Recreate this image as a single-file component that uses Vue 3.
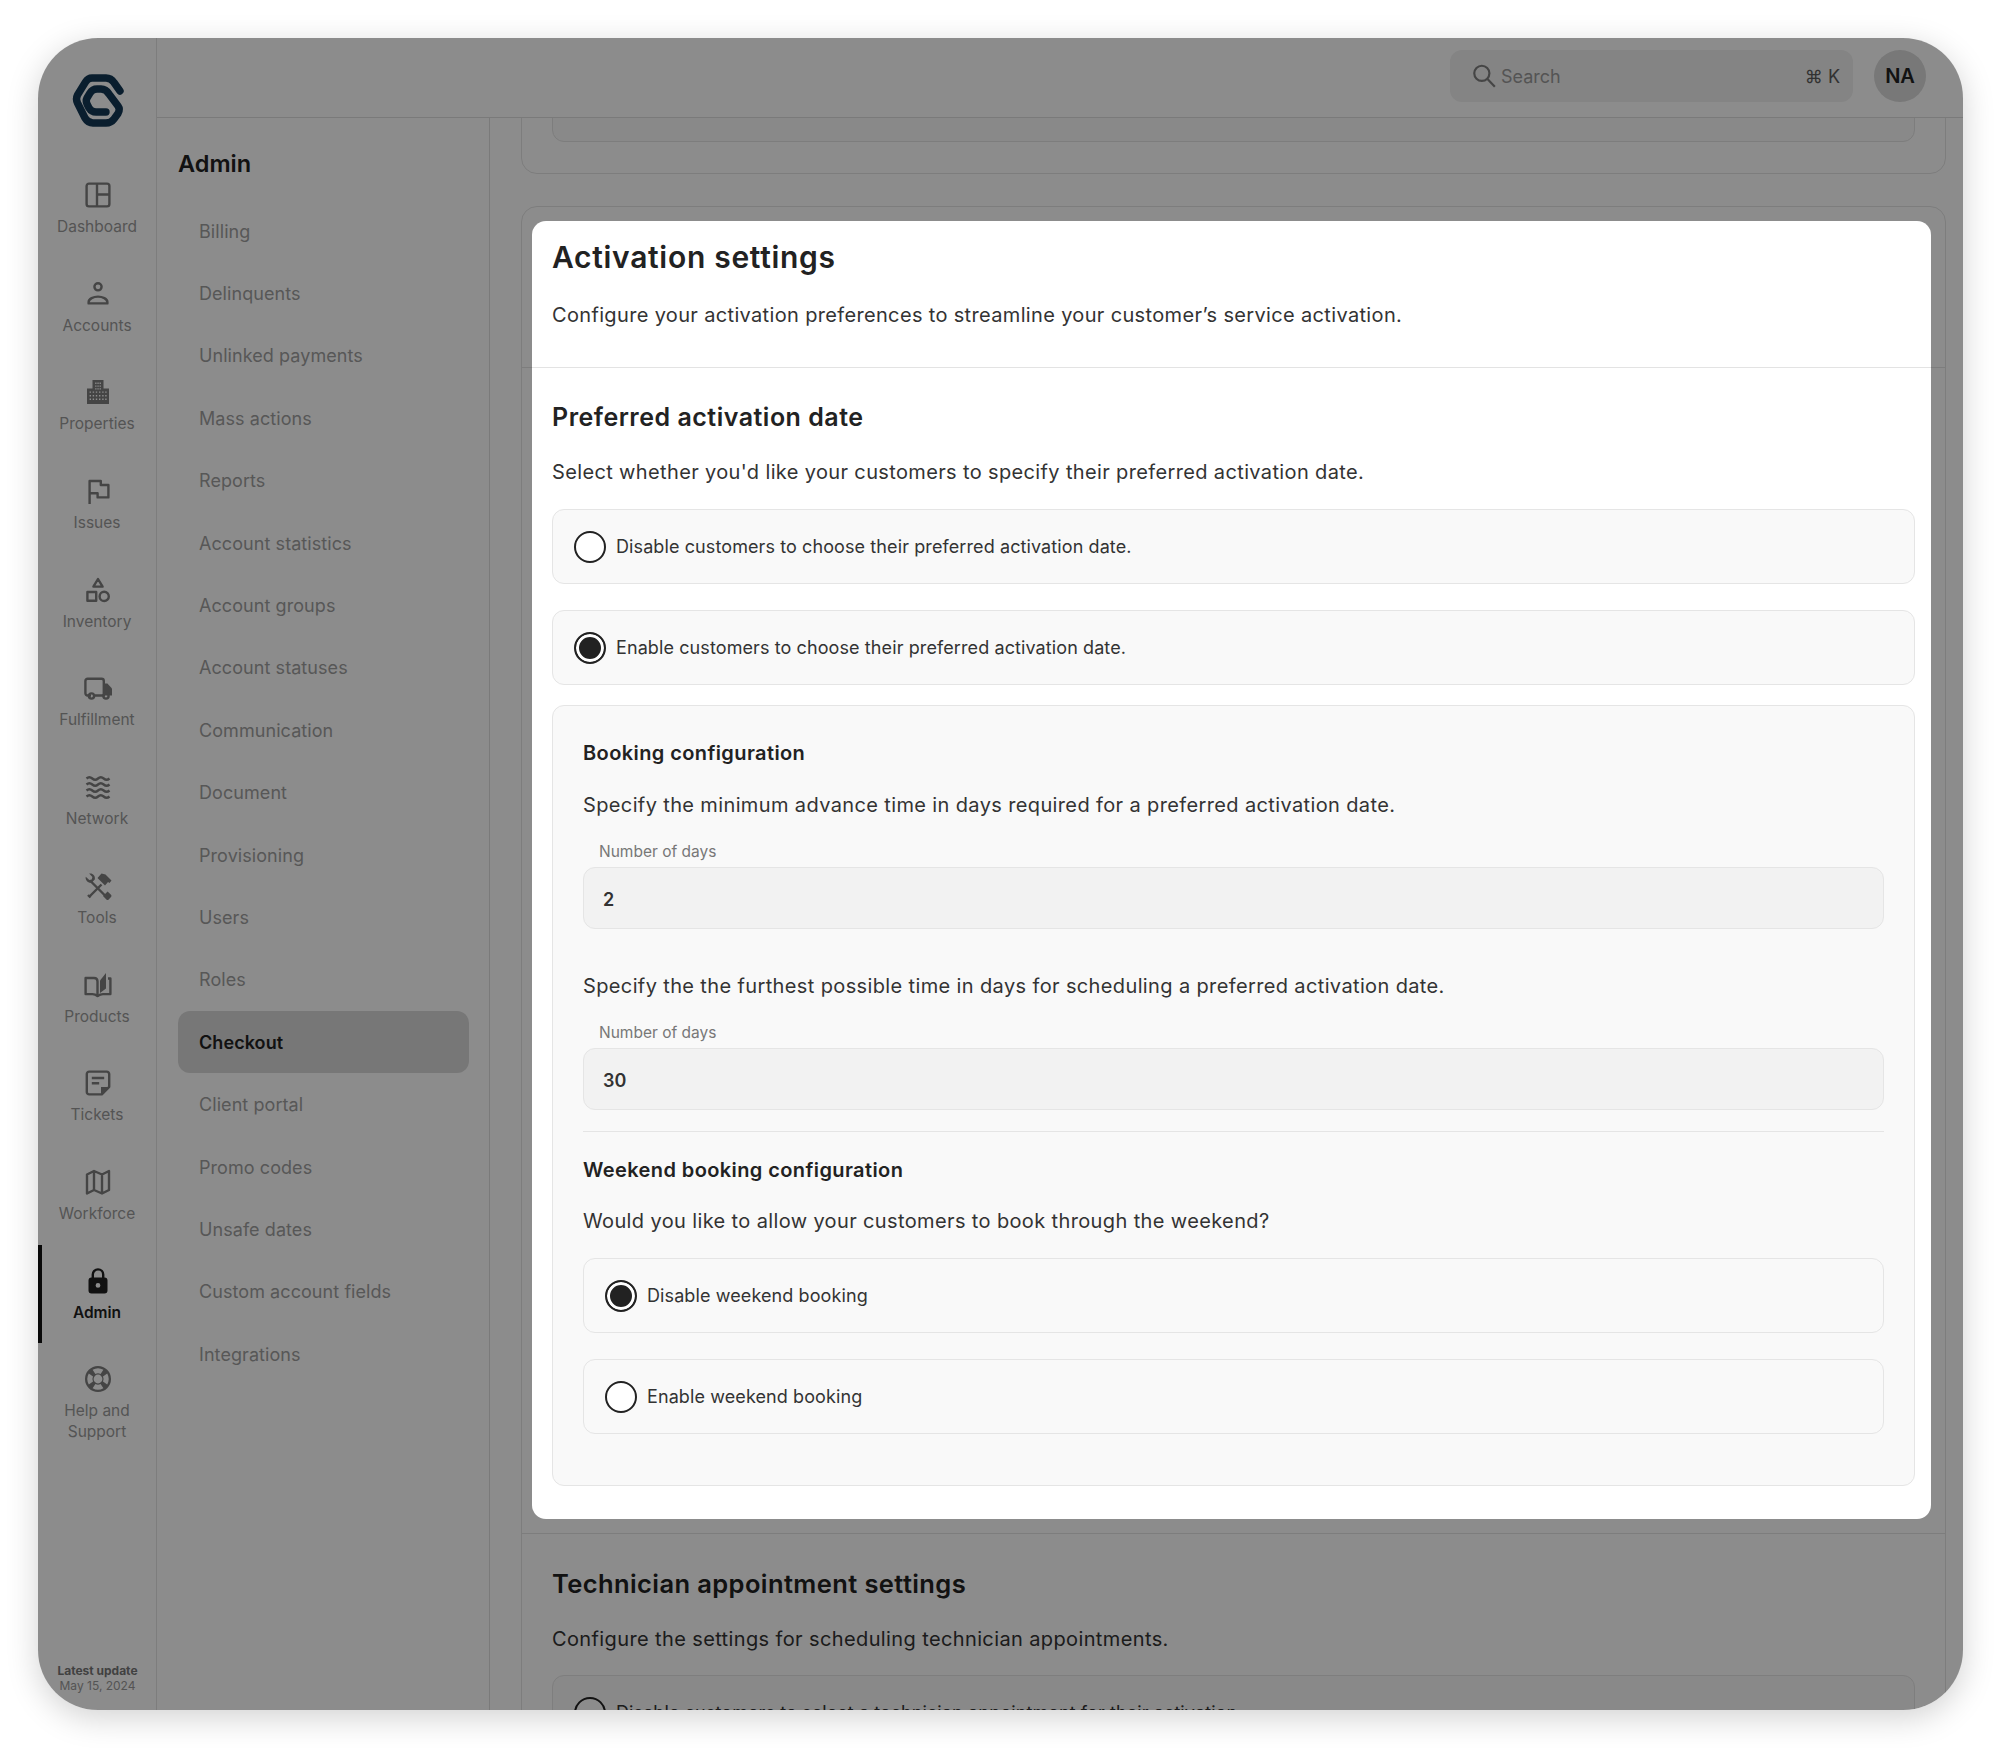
<script setup>
const stroke = (d) => ({ d, f: false })
const fill = (d) => ({ d, f: true })
const holes = (xs, ys, s) =>
  xs.flatMap((x) => ys.map((y) => `M${x} ${y}h${s}v${s}h-${s}z`)).join('')

const rail = [
  { label: 'Dashboard', paths: [stroke('M7 4.6h18a2.4 2.4 0 0 1 2.4 2.4v18a2.4 2.4 0 0 1-2.4 2.4H7A2.4 2.4 0 0 1 4.6 25V7A2.4 2.4 0 0 1 7 4.6zM15 4.6v22.8M15 15.5h12.4')] },
  { label: 'Accounts', paths: [stroke('M16 5.2a3.6 3.6 0 1 1 0 7.2a3.6 3.6 0 0 1 0-7.2z'), stroke('M6.6 25.4v-1.2c0-3.3 5-5.6 9.4-5.6s9.4 2.3 9.4 5.6v1.2z')] },
  { label: 'Properties', paths: [fill('M10.5 4h11v8.5h5.5V28H5V12.5h5.5z' + holes([13.2, 15.4, 17.6], [6.6, 9.4, 12.2], 1.3) + holes([7.6, 10.7, 13.8, 17, 20.2, 23.2], [15.4, 19, 22.6], 1.4))] },
  { label: 'Issues', paths: [stroke('M7.6 29V6h11.2v4h7.6v12.4H15.6v-4.2H7.6')] },
  { label: 'Inventory', paths: [stroke('M16 5l4.6 7.6h-9.2z'), stroke('M5.4 18h8.8v8.8H5.4z'), stroke('M22.2 17.8a4.6 4.6 0 1 1 0 9.2a4.6 4.6 0 0 1 0-9.2z')] },
  { label: 'Fulfillment', paths: [stroke('M9 23.5H5.6a2.2 2.2 0 0 1-2.2-2.2V9a2.2 2.2 0 0 1 2.2-2.2h14a2.2 2.2 0 0 1 2.2 2.2v14.5H13'), fill('M21.8 11.6h3.6l4.6 5v6.9h-8.2z'), stroke('M9.5 21.4a2.6 2.6 0 1 1 0 5.2a2.6 2.6 0 0 1 0-5.2z'), stroke('M24 21.4a2.6 2.6 0 1 1 0 5.2a2.6 2.6 0 0 1 0-5.2z')] },
  { label: 'Network', paths: [stroke('M4.5 7.5q2.9-2.6 5.8 0t5.7 0t5.7 0t5.8 0M4.5 13.5q2.9-2.6 5.8 0t5.7 0t5.7 0t5.8 0M4.5 19.5q2.9-2.6 5.8 0t5.7 0t5.7 0t5.8 0M4.5 25.5q2.9-2.6 5.8 0t5.7 0t5.7 0t5.8 0')] },
  { label: 'Tools', paths: [stroke('M7.5 26.5l12-12'), fill('M15.5 8l4-4.5 4 1 6 6-2 2.5-1.5-1-3 3.5-4-4z'), stroke('M6 25l2.5 2.5'), stroke('M9 11.5l15 15'), fill('M3.8 6.8l3.5 3.3 2.4-.7.7-2.3-3.3-3.5c3-1 6.6 1.8 5.7 5.8l-3.2 3.4c-3.6.6-6.8-3-5.8-6z'), fill('M21 26l4.6-4.6 3.4 3.4a1.6 1.6 0 0 1 0 2.3l-2.3 2.3a1.6 1.6 0 0 1-2.3 0z')] },
  { label: 'Products', paths: [stroke('M15.5 27c-1.6-1.3-3-1.9-5-1.9H3.6V9h8.4c2 0 3.5 1.5 3.5 3.5z'), fill('M18 24V11.5L24 4v15.5z'), stroke('M26 9.5h2.4v15.6H21c-2 0-3.5.6-5.5 1.9')] },
  { label: 'Tickets', paths: [stroke('M7.2 4.6h17.6a2.4 2.4 0 0 1 2.4 2.4v12.8L19.8 27.4H7.2A2.4 2.4 0 0 1 4.8 25V7a2.4 2.4 0 0 1 2.4-2.4z'), stroke('M9.8 11h12.4M9.8 16.2h7.4'), fill('M19 27.4V20h8.2z')] },
  { label: 'Workforce', paths: [stroke('M5 8.5l7-3.5 8 3.5 7-3.5v19l-7 3.5-8-3.5-7 3.5zM12 5v19M20 8.5v19')] },
  { label: 'Admin', active: true, paths: [fill('M9.5 12.5h13a3 3 0 0 1 3 3v10a3 3 0 0 1-3 3h-13a3 3 0 0 1-3-3v-10a3 3 0 0 1 3-3zM16 18a2.4 2.4 0 1 0 0 4.8a2.4 2.4 0 0 0 0-4.8z'), stroke('M10.8 13V9.6a5.2 5.2 0 0 1 10.4 0V13')] },
  { label: 'Help and Support', paths: [fill('M16 3a13 13 0 1 1 0 26a13 13 0 0 1 0-26zM16 11.6a4.4 4.4 0 1 0 0 8.8a4.4 4.4 0 0 0 0-8.8zM10.6 6.8l2.8 4.2a6 6 0 0 1 5.2 0l2.8-4.2a11 11 0 0 0-10.8 0zM25.2 10.6l-4.2 2.8a6 6 0 0 1 0 5.2l4.2 2.8a11 11 0 0 0 0-10.8zM21.4 25.2l-2.8-4.2a6 6 0 0 1-5.2 0l-2.8 4.2a11 11 0 0 0 10.8 0zM6.8 21.4l4.2-2.8a6 6 0 0 1 0-5.2l-4.2-2.8a11 11 0 0 0 0 10.8z')] },
]

const nav = ['Billing', 'Delinquents', 'Unlinked payments', 'Mass actions', 'Reports', 'Account statistics', 'Account groups', 'Account statuses', 'Communication', 'Document', 'Provisioning', 'Users', 'Roles', 'Checkout', 'Client portal', 'Promo codes', 'Unsafe dates', 'Custom account fields', 'Integrations']
</script>

<template>
  <div class="page">
    <div class="window">
      <aside class="rail">
        <svg class="logo" viewBox="0 0 56 56" width="56" height="56" fill="none" stroke="#133854" stroke-width="7.4" stroke-linecap="round" stroke-linejoin="round">
          <path d="M50 18L44 9.5Q41 5 36 5H22Q18 5 15.5 9L7.5 22Q5.5 26 7.5 30L15 45Q18 50 23 50H36Q41 50 44 46L48 40.5Q50.5 36.5 48 33L39 21Q36 16 31 16H27Q22.5 16 20 20L17 25Q15.5 28 17 31L19 35Q21.5 39 26 39H36" />
        </svg>
        <a v-for="item in rail" :key="item.label" class="rail-item" :class="{ active: item.active }">
          <svg class="rail-icon" viewBox="0 0 32 32" width="32" height="32">
            <path
              v-for="(p, i) in item.paths"
              :key="i"
              :d="p.d"
              :fill="p.f ? 'currentColor' : 'none'"
              :stroke="p.f ? 'none' : 'currentColor'"
              fill-rule="evenodd"
              stroke-width="2.4"
              stroke-linejoin="round"
            />
          </svg>
          <span class="rail-label">{{ item.label }}</span>
        </a>
        <div class="update">
          <strong>Latest update</strong>
          <span>May 15, 2024</span>
        </div>
      </aside>

      <div class="column">
        <header class="topbar">
          <div class="search">
            <svg viewBox="0 0 24 24" width="26" height="26" fill="none" stroke-width="2">
              <circle cx="10" cy="9.5" r="7" />
              <path d="M15.2 14.7L22 22" />
            </svg>
            <span class="search-text">Search</span>
            <span class="kbd">⌘ K</span>
          </div>
          <div class="avatar">NA</div>
        </header>

        <div class="body">
          <nav class="sidebar">
            <h2>Admin</h2>
            <a v-for="n in nav" :key="n" class="nav-item" :class="{ selected: n === 'Checkout' }">{{ n }}</a>
          </nav>

          <main class="main">
            <section class="panel panel-prev"><div class="prev-box"></div></section>

            <section class="panel">
              <div class="panel-head">
                <h1>Activation settings</h1>
                <p>Configure your activation preferences to streamline your customer’s service activation.</p>
              </div>
              <div class="panel-body">
                <h3>Preferred activation date</h3>
                <p class="lead">Select whether you'd like your customers to specify their preferred activation date.</p>
                <label class="option"><i class="radio"></i>Disable customers to choose their preferred activation date.</label>
                <label class="option second"><i class="radio on"></i>Enable customers to choose their preferred activation date.</label>

                <div class="box">
                  <h4>Booking configuration</h4>
                  <p class="box-lead">Specify the minimum advance time in days required for a preferred activation date.</p>
                  <div class="field-label">Number of days</div>
                  <div class="input">2</div>
                  <p class="box-lead spaced">Specify the the furthest possible time in days for scheduling a preferred activation date.</p>
                  <div class="field-label">Number of days</div>
                  <div class="input">30</div>
                  <hr />
                  <h4>Weekend booking configuration</h4>
                  <p class="box-lead tight">Would you like to allow your customers to book through the weekend?</p>
                  <label class="option"><i class="radio on"></i>Disable weekend booking</label>
                  <label class="option second"><i class="radio"></i>Enable weekend booking</label>
                </div>
              </div>

              <div class="panel-head tech">
                <h1 class="tech-title">Technician appointment settings</h1>
                <p>Configure the settings for scheduling technician appointments.</p>
                <label class="option tech-option"><i class="radio"></i>Disable customers to select a technician appointment for their activation.</label>
              </div>
            </section>
          </main>
        </div>
      </div>

      <div class="spotlight"></div>
    </div>
  </div>
</template>

<style scoped>
.page {
  width: 2000px;
  height: 1748px;
  box-sizing: border-box;
  padding: 38px;
  background: #fff;
  font-family: Inter, "Noto Sans", sans-serif;
  color: #222;
}
.window {
  position: relative;
  display: flex;
  width: 1925px;
  height: 1672px;
  overflow: hidden;
  border-radius: 60px;
  background: #fff;
  box-shadow: 0 8px 32px rgba(0, 0, 0, 0.18);
}
.spotlight {
  position: absolute;
  left: 494px;
  top: 183px;
  width: 1399px;
  height: 1298px;
  border-radius: 14px;
  box-shadow: 0 0 0 3000px rgba(0, 0, 0, 0.45);
  pointer-events: none;
}

.rail {
  flex: none;
  width: 119px;
  box-sizing: border-box;
  display: flex;
  flex-direction: column;
  align-items: stretch;
  border-right: 1px solid #e3e3e3;
}
.logo {
  flex: none;
  align-self: center;
  margin: 35px 0 30px 1px;
  height: 56px;
}
.rail-item {
  position: relative;
  flex: none;
  height: 98.7px;
  box-sizing: border-box;
  padding-top: 20px;
  display: flex;
  flex-direction: column;
  align-items: center;
  color: #7e7e7e;
}
.rail-item.active {
  color: #1f1f1f;
}
.rail-item.active::before {
  content: "";
  position: absolute;
  left: 0;
  top: 0;
  bottom: 0;
  width: 4px;
  background: #111;
}
.rail-icon {
  flex: none;
  display: block;
  margin-left: 1px;
}
.rail-label {
  margin-top: 6px;
  font-size: 15.5px;
  line-height: 20.5px;
  text-align: center;
  color: #9a9a9a;
  width: 100px;
}
.rail-item.active .rail-label {
  color: #1f1f1f;
  font-weight: 600;
}
.update {
  margin-top: auto;
  padding: 0 0 17px 1px;
  display: flex;
  flex-direction: column;
  align-items: center;
  font-size: 12px;
  line-height: 15px;
  color: #9a9a9a;
}
.update strong {
  color: #777;
  font-weight: 700;
}

.column {
  flex: 1;
  min-width: 0;
  display: flex;
  flex-direction: column;
}
.topbar {
  flex: none;
  height: 80px;
  box-sizing: border-box;
  border-bottom: 1px solid #dedede;
  display: flex;
  align-items: flex-start;
  justify-content: flex-end;
  padding: 12px 37px 0 0;
  gap: 21px;
}
.search {
  width: 403px;
  height: 52px;
  box-sizing: border-box;
  border-radius: 12px;
  background: #f0f0f0;
  display: flex;
  align-items: center;
  padding: 0 13px 0 21px;
  font-size: 18px;
  color: #9a9a9a;
}
.search svg {
  stroke: #7e7e7e;
  flex: none;
  margin-right: 4px;
}
.search-text {
  flex: 1;
}
.kbd {
  color: #5c5c5c;
}
.avatar {
  width: 52px;
  height: 52px;
  border-radius: 50%;
  background: #dadada;
  display: flex;
  align-items: center;
  justify-content: center;
  font-size: 20px;
  font-weight: 600;
  color: #222;
}

.body {
  flex: 1;
  min-height: 0;
  display: flex;
}
.sidebar {
  flex: none;
  width: 333px;
  box-sizing: border-box;
  border-right: 1px solid #dedede;
  padding: 31px 20px 0 21px;
  display: flex;
  flex-direction: column;
}
.sidebar h2 {
  margin: 0 0 21px;
  font-size: 23.5px;
  line-height: 30px;
  font-weight: 600;
  color: #222;
}
.nav-item {
  flex: none;
  height: 62.4px;
  box-sizing: border-box;
  padding-left: 21px;
  display: flex;
  align-items: center;
  border-radius: 12px;
  font-size: 18px;
  letter-spacing: 0.07px;
  color: #9f9f9f;
}
.nav-item.selected {
  background: #d9d9d9;
  color: #222;
  font-weight: 600;
}

.main {
  flex: 1;
  min-width: 0;
  overflow: hidden;
  padding: 0 17px 0 31px;
}
.panel {
  border: 1px solid #e3e3e3;
  border-radius: 16px;
  background: #fff;
}
.panel-prev {
  height: 100px;
  box-sizing: border-box;
  margin-top: -44px;
  margin-bottom: 32px;
  padding: 0 30px 31px;
}
.prev-box {
  height: 100%;
  box-sizing: border-box;
  border: 1px solid #e3e3e3;
  border-radius: 12px;
  background: #f9f9f9;
}
.panel-head {
  padding: 32px 30px 38px;
  border-bottom: 1px solid #e3e3e3;
}
h1 {
  margin: 0;
  font-size: 30px;
  letter-spacing: 0.7px;
  line-height: 36px;
  font-weight: 600;
  color: #222;
}
.panel-head p {
  margin: 26px 0 0;
  font-size: 20px;
  letter-spacing: 0.34px;
  line-height: 28px;
  color: #333;
}
.panel-body {
  padding: 34px 30px 47px;
  border-bottom: 1px solid #e3e3e3;
}
h3 {
  margin: 0;
  font-size: 25px;
  letter-spacing: 0.5px;
  line-height: 30px;
  font-weight: 600;
  color: #222;
}
.lead {
  margin: 26px 0 23px;
  font-size: 20px;
  letter-spacing: 0.36px;
  line-height: 28px;
  color: #333;
}
.option {
  height: 75px;
  box-sizing: border-box;
  display: flex;
  align-items: center;
  gap: 10px;
  padding: 0 21px;
  border: 1px solid #e5e5e5;
  border-radius: 12px;
  background: #f9f9f9;
  font-size: 18px;
  letter-spacing: 0.1px;
  color: #333;
}
.option.second {
  margin-top: 26px;
}
.radio {
  flex: none;
  width: 32px;
  height: 32px;
  box-sizing: border-box;
  border: 2px solid #222;
  border-radius: 50%;
  background: #fff;
}
.radio.on {
  background: #222;
  box-shadow: inset 0 0 0 3px #fff;
}
.box {
  margin-top: 20px;
  padding: 34px 30px 51px;
  border: 1px solid #e5e5e5;
  border-radius: 12px;
  background: #f9f9f9;
}
h4 {
  margin: 0;
  font-size: 20px;
  letter-spacing: 0.4px;
  line-height: 26px;
  font-weight: 600;
  color: #222;
}
.box-lead {
  margin: 25px 0 23px;
  font-size: 20px;
  letter-spacing: 0.37px;
  line-height: 28px;
  color: #333;
}
.box-lead.spaced {
  margin-top: 43px;
}
.box-lead.tight {
  margin: 24px 0 23px;
}
.field-label {
  padding-left: 16px;
  margin-bottom: 5px;
  font-size: 15.5px;
  line-height: 20px;
  color: #777;
}
.input {
  height: 62px;
  box-sizing: border-box;
  display: flex;
  align-items: center;
  padding: 2px 19px 0;
  border: 1px solid #e5e5e5;
  border-radius: 12px;
  background: #f2f2f2;
  font-size: 18px;
  font-weight: 600;
  color: #333;
}
hr {
  margin: 21px 0 25px;
  border: 0;
  border-top: 1px solid #e5e5e5;
}
.tech {
  border-bottom: 0;
  padding-bottom: 0;
  padding-top: 32px;
}
.tech-title {
  font-size: 25.5px;
  letter-spacing: 0.4px;
}
.tech p {
  margin-top: 23px;
  letter-spacing: 0.38px;
}
.tech-option {
  margin-top: 22px;
  letter-spacing: 0.1px;
}
</style>
